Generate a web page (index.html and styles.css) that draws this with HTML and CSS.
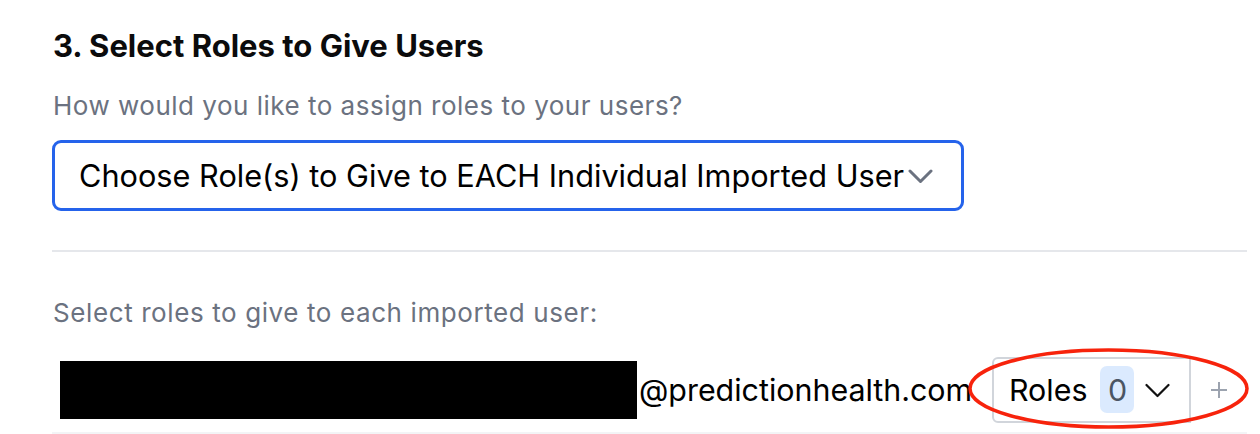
FILE: index.html
```html
<!DOCTYPE html>
<html lang="en">
<head>
<meta charset="utf-8">
<title>Select Roles</title>
<link rel="stylesheet" href="styles.css">
</head>
<body>
<section class="step">
  <h2 class="step-title">3. Select Roles to Give Users</h2>
  <p class="question">How would you like to assign roles to your users?</p>
  <div class="select">
    <span class="select-value">Choose Role(s) to Give to EACH Individual Imported User</span>
    <svg class="select-chevron" width="25" height="15" viewBox="0 0 25 15"><path d="M2 2 L12.5 12.5 L23 2" fill="none" stroke="#6b7280" stroke-width="3" stroke-linecap="round" stroke-linejoin="round"/></svg>
  </div>
  <hr class="divider">
  <p class="label">Select roles to give to each imported user:</p>
  <div class="user-row">
    <div class="user-email"><span class="redacted"></span><span class="domain">@predictionhealth.com</span></div>
    <div class="role-group">
      <div class="role-button">
        <span class="role-text">Roles</span>
        <span class="badge">0</span>
        <svg class="role-chevron" width="25" height="15" viewBox="0 0 25 15"><path d="M1.5 2 L12.5 13 L23.5 2" fill="none" stroke="#111" stroke-width="2.2" stroke-linecap="round" stroke-linejoin="round"/></svg>
      </div>
      <div class="role-add">
        <svg width="18" height="18" viewBox="0 0 18 18"><path d="M9 1 V17 M1 9 H17" stroke="#9ca3af" stroke-width="2"/></svg>
      </div>
      <svg class="highlight" width="284" height="84" viewBox="0 0 284 84"><ellipse cx="141.5" cy="41.5" rx="138.5" ry="38.5" fill="none" stroke="#f7230c" stroke-width="3.5"/></svg>
    </div>
  </div>
</section>
</body>
</html>
```
FILE: styles.css
```css
* { box-sizing: border-box; }
body {
  margin: 0;
  background: #fff;
  font-family: Inter, "Noto Sans", "Liberation Sans", sans-serif;
  color: #000;
}
.step {
  padding: 24px 13px 0 52px;
}
.step-title {
  margin: 0;
  font-size: 31px;
  font-weight: 700;
  line-height: 44px;
  color: #0b0b0c;
  padding-left: 1px;
}
.question {
  margin: 20px 0 0;
  font-size: 26px;
  letter-spacing: 0.5px;
  line-height: 36px;
  color: #6b7280;
  padding-left: 1px;
}
.select {
  margin-top: 16px;
  width: 912px;
  height: 71px;
  border: 3px solid #2563eb;
  border-radius: 9px;
  display: flex;
  align-items: center;
  padding: 0 0 0 24px;
}
.select-value {
  font-size: 30.7px;
  white-space: nowrap;
  color: #000;
}
.select-chevron { flex: none; margin-left: 4px; margin-top: 2px; }
.divider {
  margin: 39px 0 0;
  border: 0;
  height: 2px;
  background: #e5e7eb;
}
.label {
  margin: 43px 0 0;
  font-size: 26px;
  letter-spacing: 0.6px;
  line-height: 36px;
  color: #6b7280;
  padding-left: 1px;
}
.user-row {
  margin-top: 16px;
  display: flex;
  align-items: center;
  height: 87px;
  border-bottom: 2px solid #f3f4f6;
}
.user-email {
  display: flex;
  align-items: center;
  padding-left: 8px;
}
.redacted {
  display: block;
  width: 577px;
  height: 58px;
  background: #000;
}
.domain {
  font-size: 30.4px;
  padding-left: 2px;
  white-space: nowrap;
}
.role-group {
  margin-left: auto;
  position: relative;
  display: flex;
  align-items: stretch;
  height: 66px;
  width: 255px;
}
.role-button {
  display: flex;
  align-items: center;
  width: 199px;
  border: 2px solid #d1d5db;
  border-radius: 6px 0 0 6px;
  padding-left: 15px;
}
.role-text { font-size: 30.4px; }
.badge {
  margin-left: 13px;
  width: 34px;
  height: 47px;
  border-radius: 7px;
  background: #dbeafe;
  color: #4b5563;
  font-size: 30.4px;
  display: flex;
  align-items: center;
  justify-content: center;
}
.role-chevron { margin-left: 11px; margin-top: 1px; }
.role-add {
  flex: 1;
  display: flex;
  align-items: center;
  justify-content: center;
}
.highlight {
  position: absolute;
  left: -25px;
  top: -10px;
  pointer-events: none;
}
```
